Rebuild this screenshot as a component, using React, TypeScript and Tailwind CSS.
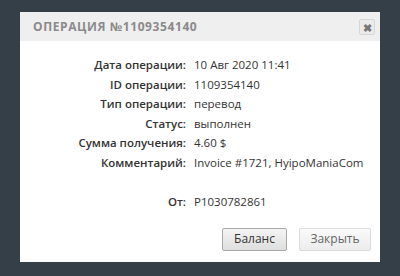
import React from "react";

const rows: [string, string][] = [
  ["Дата операции:", "10 Авг 2020 11:41"],
  ["ID операции:", "1109354140"],
  ["Тип операции:", "перевод"],
  ["Статус:", "выполнен"],
  ["Сумма получения:", "4.60 $"],
  ["Комментарий:", "Invoice #1721, HyipoManiaCom"],
  ["", ""],
  ["От:", "P1030782861"],
];

export default function App() {
  return (
    <div
      className="w-[400px] h-[276px] bg-[#343f48] pt-[12px] pl-[20px] overflow-hidden"
      style={{ fontFamily: '"Open Sans", "Noto Sans", sans-serif' }}
    >
      <div className="w-[360px] h-[250px] bg-white flex flex-col">
        <div className="h-[29px] bg-[#efefef] flex items-center justify-between pl-[13px] pr-[5px]">
          <span className="text-[12px] font-bold tracking-[0.6px] text-[#8a8a8a]">
            ОПЕРАЦИЯ №1109354140
          </span>
          <div className="w-[16px] h-[16px] mt-[1px] rounded-[2px] border border-[#d6d6d6] bg-[#ebebeb] flex items-center justify-center text-[#777] text-[11px] font-bold leading-none">
            ✖
          </div>
        </div>
        <div className="grid grid-cols-[166px_1fr] gap-x-[8px] pt-[14px] text-[11.5px] text-[#333]">
          {rows.map(([l, v], i) => (
            <React.Fragment key={i}>
              <div className="h-[19.6px] leading-[19.6px] text-right font-semibold">{l}</div>
              <div className="h-[19.6px] leading-[19.6px]">{v}</div>
            </React.Fragment>
          ))}
        </div>
        <div className="flex justify-end gap-[12px] pr-[9px] pt-[16px]">
          <button className="w-[65px] h-[23px] rounded-[2px] border border-[#a9a9a9] bg-gradient-to-b from-[#f4f4f4] to-[#dedede] text-[12px] text-[#333]">
            Баланс
          </button>
          <button className="w-[72px] h-[23px] rounded-[2px] border border-[#dcdcdc] bg-gradient-to-b from-[#fafafa] to-[#ececec] text-[12px] text-[#666]">
            Закрыть
          </button>
        </div>
      </div>
    </div>
  );
}
